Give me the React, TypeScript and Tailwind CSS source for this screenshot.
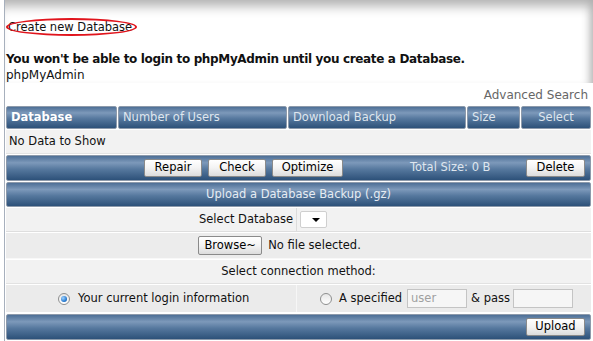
import React from "react";

const bar =
  "bg-[linear-gradient(to_bottom,#4d6f96_0%,#7d99ba_28%,#56789e_55%,#2d5179_100%)] border border-[#8d9aab] rounded-[2px]";

const btn =
  "h-[18px] px-2 text-[11.5px] text-black bg-[linear-gradient(to_bottom,#ffffff_0%,#f3f3f3_50%,#dcdcdc_100%)] border border-[#8a8a8a] rounded-[2px] leading-none flex items-center justify-center";

function Radio({ checked }: { checked?: boolean }) {
  return (
    <span className="inline-flex h-[12px] w-[12px] items-center justify-center rounded-full border border-[#8e8f8f] bg-[linear-gradient(to_bottom,#e6e6e6,#ffffff)]">
      {checked && (
        <span className="h-[6px] w-[6px] rounded-full bg-[radial-gradient(circle_at_35%_35%,#9fd3ff,#1a6fc9_70%,#0a3f80)]" />
      )}
    </span>
  );
}

export default function App() {
  return (
    <div className="w-[593px] h-[341px] overflow-hidden bg-white font-['DejaVu_Sans',sans-serif] text-[11.5px] text-[#111]">
      <div className="ml-[4px] h-full border-l border-[#a7b0bd]">
        {/* Top */}
        <div className="h-[83px] pl-[1px] shadow-[inset_0_14px_12px_-8px_#b0b0b0,inset_-9px_0_8px_-6px_#b3b3b3]">
          <div className="pt-[19px] h-[51px]">
            <div className="relative inline-block">
              <span className="block text-[11.5px] leading-[16px] pl-[2px]">Create new Database</span>
              <span className="absolute left-[0px] top-[-1px] h-[18px] w-[131px] rounded-[50%] border-2 border-[#e0141c]" />
            </div>
          </div>
          <div className="font-bold text-[12px] leading-[16px] tracking-[-0.35px]">
            You won't be able to login to phpMyAdmin until you create a Database.
          </div>
          <div className="text-[12px] leading-[16px]">phpMyAdmin</div>
        </div>
        <div className="flex justify-end pr-[5px] h-[23px] items-center text-[12px] text-[#666]">
          Advanced Search
        </div>

        {/* Table */}
        <div className="ml-[1px] w-[585px] flex flex-col gap-[1px]">
          <div className="flex gap-[1px] h-[23px]">
            <div className={`${bar} w-[111px] flex items-center pl-[4px] font-bold text-white`}>Database</div>
            <div className={`${bar} w-[169px] flex items-center pl-[4px] text-[#dfe6ee]`}>Number of Users</div>
            <div className={`${bar} w-[178px] flex items-center pl-[4px] text-[#dfe6ee]`}>Download Backup</div>
            <div className={`${bar} w-[53px] flex items-center pl-[4px] text-[#dfe6ee]`}>Size</div>
            <div className={`${bar} flex-1 flex items-center justify-center text-[#dfe6ee]`}>Select</div>
          </div>
          <div className="h-[24px] bg-[#f2f2f2] flex items-center pl-[3px] border-b border-[#e3e3e3]">No Data to Show</div>
          <div className={`${bar} h-[26px] flex items-center pl-[137px] pr-[5px]`}>
            <button className={`${btn} w-[58px]`}>Repair</button>
            <button className={`${btn} w-[58px] ml-[6px]`}>Check</button>
            <button className={`${btn} w-[71px] ml-[6px]`}>Optimize</button>
            <span className="ml-[67px] text-[#dfe6ee]">Total Size: 0 B</span>
            <button className={`${btn} w-[59px] ml-auto`}>Delete</button>
          </div>
          <div className={`${bar} h-[25px] flex items-center justify-center text-[#e6ecf3]`}>
            Upload a Database Backup (.gz)
          </div>
          <div className="h-[24px] bg-[#f2f2f2] flex border-b border-[#dedede]">
            <div className="w-[291px] flex items-center justify-end pr-[3px] border-r border-[#dcdcdc]">Select Database</div>
            <div className="flex items-center pl-[3px]">
              <div className="h-[17px] w-[27px] bg-white border border-[#cfcfcf] rounded-[2px] flex items-center justify-end pr-[6px]">
                <span className="w-0 h-0 border-l-[4px] border-r-[4px] border-t-[4px] border-l-transparent border-r-transparent border-t-black" />
              </div>
            </div>
          </div>
          <div className="h-[26px] bg-[#ececec] flex items-center justify-center border-b border-[#f8f8f8]">
            <button className={`${btn} w-[64px] h-[19px] bg-[linear-gradient(to_bottom,#f8f8f8_0%,#e8e8e8_50%,#d6d6d6_100%)]`}>Browse~</button>
            <span className="ml-[6px] mr-[38px]">No file selected.</span>
          </div>
          <div className="h-[24px] bg-[#f2f2f2] flex items-center justify-center border-b border-[#e2e2e2]">
            Select connection method:
          </div>
          <div className="h-[27px] bg-[#ebebeb] flex">
            <div className="w-[291px] flex items-center pl-[52px] gap-[8px] border-r border-[#f6f6f6]">
              <Radio checked />
              <span>Your current login information</span>
            </div>
            <div className="flex-1 flex items-center pl-[23px]">
              <Radio />
              <span className="ml-[7px]">A specified</span>
              <span className="ml-[5px] h-[19px] w-[60px] bg-[#f6f6f6] border border-[#c4c4c4] flex items-center pl-[3px] text-[#a0a0a0]">user</span>
              <span className="ml-[4px]">&amp; pass</span>
              <span className="ml-[3px] h-[19px] w-[60px] bg-[#f6f6f6] border border-[#c4c4c4]" />
            </div>
          </div>
          <div className={`${bar} h-[26px] mt-[1px] flex items-center justify-end pr-[5px]`}>
            <button className={`${btn} w-[59px]`}>Upload</button>
          </div>
        </div>
      </div>
    </div>
  );
}
